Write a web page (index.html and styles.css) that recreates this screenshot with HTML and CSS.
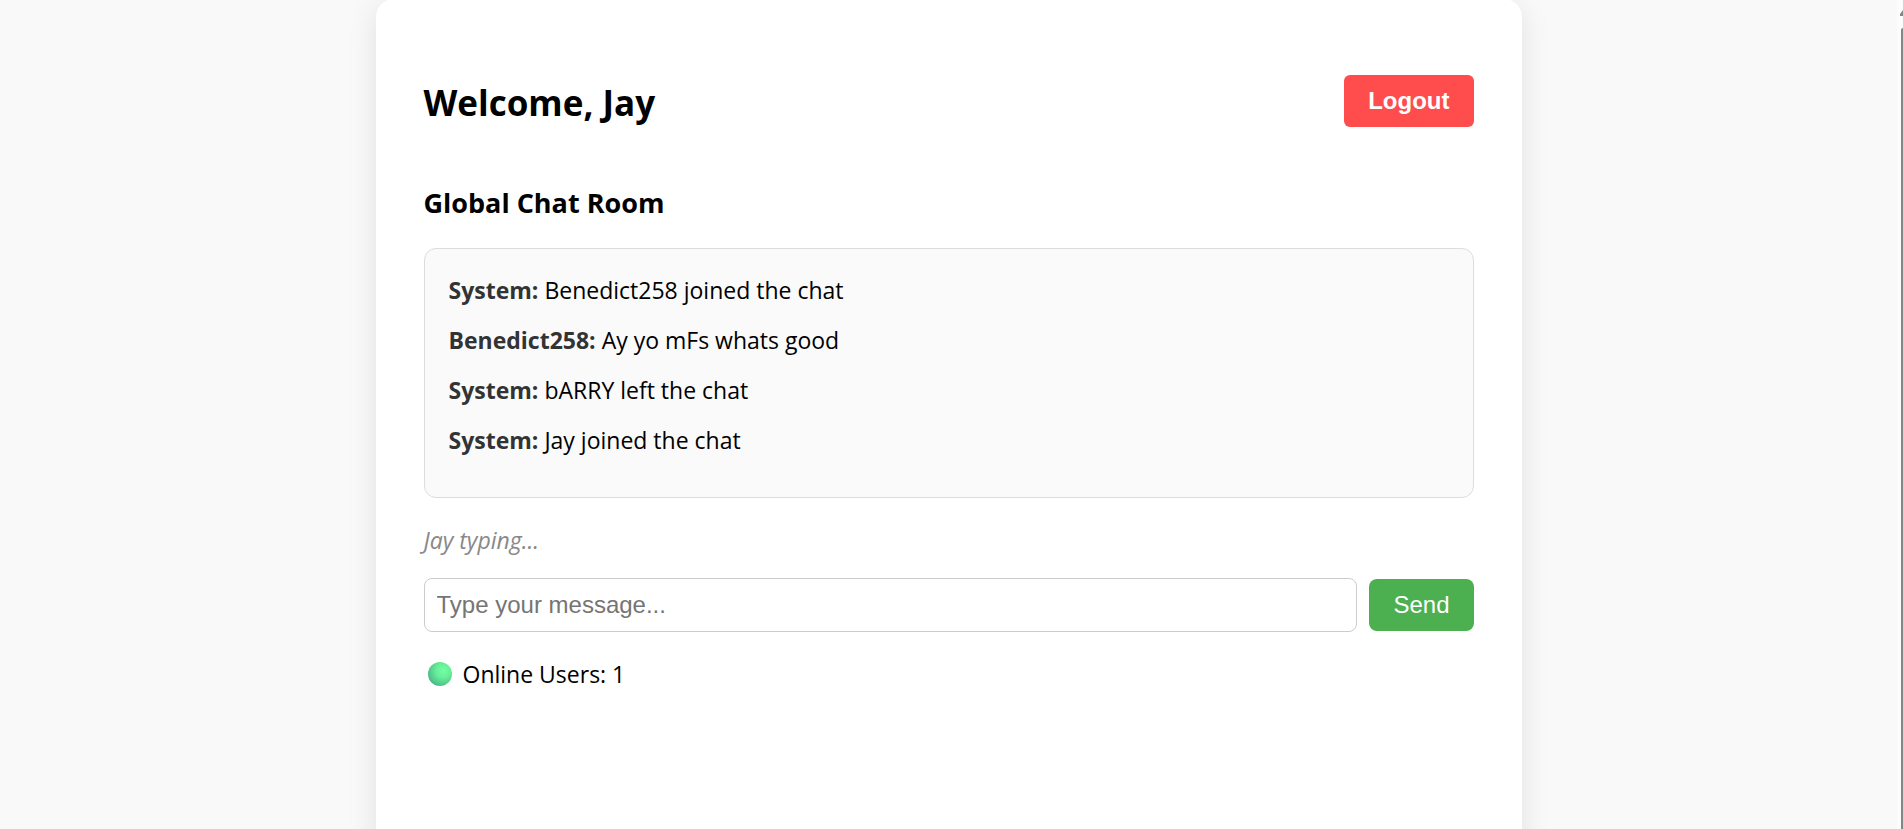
FILE: index.html
```html
<!DOCTYPE html>
<html lang="en">
<head>
<meta charset="utf-8">
<title>Global Chat Room</title>
<link rel="stylesheet" href="styles.css">
</head>
<body>
<div class="viewport">
  <div class="page">
    <main class="card">
      <header class="header">
        <h2 class="welcome">Welcome, Jay</h2>
        <button class="btn btn-logout" type="button">Logout</button>
      </header>
      <h3 class="room">Global Chat Room</h3>
      <div class="messages">
        <p class="message"><strong class="author">System:</strong> Benedict258 joined the chat</p>
        <p class="message"><strong class="author">Benedict258:</strong> Ay yo mFs whats good</p>
        <p class="message"><strong class="author">System:</strong> bARRY left the chat</p>
        <p class="message"><strong class="author">System:</strong> Jay joined the chat</p>
      </div>
      <p class="typing">Jay typing...</p>
      <form class="composer">
        <input class="field" type="text" placeholder="Type your message..." aria-label="Type your message">
        <button class="btn btn-send" type="button">Send</button>
      </form>
      <p class="online">
        <svg class="dot" viewBox="0 0 24 24" aria-hidden="true">
          <defs>
            <radialGradient id="ball" cx="0.64" cy="0.36" r="0.76">
              <stop offset="0" stop-color="#74ffa4"/>
              <stop offset="0.4" stop-color="#66ee98"/>
              <stop offset="0.8" stop-color="#50c58b"/>
              <stop offset="1" stop-color="#4b9c94"/>
            </radialGradient>
          </defs>
          <circle cx="12" cy="12" r="12" fill="url(#ball)"/>
        </svg>
        <span>Online Users: 1</span>
      </p>
    </main>
  </div>
  <div class="scrollbar" aria-hidden="true">
    <svg class="arrow" viewBox="0 0 3 6"><path d="M3 0v6H1a1 1 0 0 1-1-2z" fill="#858585"/></svg>
    <div class="thumb"></div>
  </div>
</div>
</body>
</html>
```
FILE: styles.css
```css
* {
  box-sizing: border-box;
}

body {
  margin: 0;
  background: #f9f9f9;
  color: #000;
  font-family: "Segoe UI", "Open Sans", "Noto Sans", sans-serif;
  font-size: 23px;
  line-height: 32px;
}

h2, h3, p {
  margin: 0;
}

.viewport {
  display: flex;
  height: 100vh;
  overflow: hidden;
}

.page {
  flex: 1;
}

.card {
  max-width: 1146px;
  min-height: 110vh;
  margin: -1px auto 0;
  padding: 76px 48px 48px;
  background: #fff;
  border-radius: 18px;
  box-shadow: 0 6px 30px rgba(0, 0, 0, 0.1);
}

.header {
  display: flex;
  justify-content: space-between;
  align-items: flex-start;
  margin-bottom: 52px;
}

.welcome {
  font-size: 35px;
  line-height: 56px;
}

.btn {
  padding: 12px 24px;
  border: 0;
  color: #fff;
  font-family: "Liberation Sans", Arial, sans-serif;
  font-size: 24px;
  line-height: 28px;
}

.btn-logout {
  border-radius: 6px;
  background: #ff4d4d;
  font-weight: bold;
}

.btn-send {
  border-radius: 8px;
  background: #4caf50;
}

.room {
  margin-bottom: 25px;
  font-size: 27px;
  line-height: 40px;
}

.messages {
  padding: 25px 24px 41px;
  border: 1px solid #ddd;
  border-radius: 12px;
  background: #fafafa;
}

.message {
  margin-bottom: 18px;
}

.message:last-child {
  margin-bottom: 0;
}

.author {
  color: #333;
}

.typing {
  margin: 26px 0 22px;
  color: #888;
  font-style: italic;
}

.composer {
  display: flex;
  align-items: center;
  gap: 12px;
}

.field {
  flex: 1;
  min-width: 0;
  padding: 12px;
  border: 1px solid #ccc;
  border-radius: 8px;
  background: #fff;
  font-family: "Liberation Sans", Arial, sans-serif;
  font-size: 24px;
  line-height: 28px;
}

.field::placeholder {
  color: #757575;
}

.online {
  display: flex;
  align-items: center;
  gap: 11px;
  margin-top: 26px;
  padding-left: 4px;
}

.dot {
  width: 24px;
  height: 24px;
}

.scrollbar {
  display: flex;
  flex-direction: column;
  align-items: flex-end;
  gap: 12px;
  width: 6px;
  padding-top: 10px;
  background: #fcfcfc;
}

.arrow {
  width: 3px;
  height: 6px;
}

.thumb {
  flex: 1;
  width: 2px;
  border-radius: 2px 0 0 0;
  background: #858585;
}
```
